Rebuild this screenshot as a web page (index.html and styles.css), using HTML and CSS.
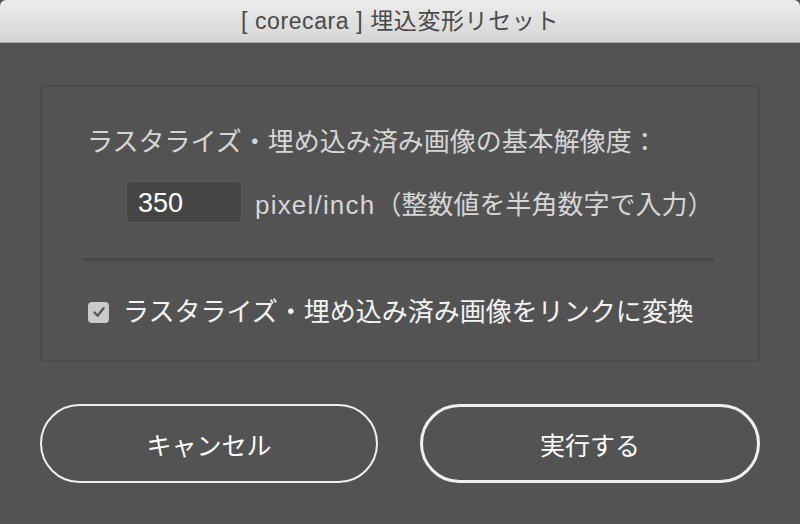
FILE: index.html
```html
<!DOCTYPE html>
<html lang="ja">
<head>
    <meta charset="UTF-8">
    <title>[ corecara ] 埋込変形リセット</title>
    <link rel="stylesheet" href="styles.css">
</head>
<body>
    <div class="titlebar">[ corecara ] 埋込変形リセット</div>
    <div class="content">
        <div class="panel">
            <div class="label">ラスタライズ・埋め込み済み画像の基本解像度：</div>
            <div class="res-row">
                <div class="num-input">350</div>
                <span class="unit"><span class="unit-latin">pixel/inch</span>（整数値を半角数字で入力）</span>
            </div>
            <div class="separator"></div>
            <div class="check-row">
                <span class="checkbox">
                    <svg width="14" height="14" viewBox="0 0 14 14">
                        <path d="M2.5 7.5 L5.6 10.8 L11.5 3.2" fill="none" stroke="#5a5a5a" stroke-width="2.4" stroke-linecap="round" stroke-linejoin="round"/>
                    </svg>
                </span>
                <span class="check-label">ラスタライズ・埋め込み済み画像をリンクに変換</span>
            </div>
        </div>
        <div class="buttons">
            <div class="btn">キャンセル</div>
            <div class="btn btn-primary">実行する</div>
        </div>
    </div>
</body>
</html>
```

FILE: styles.css
```css
body {
    margin: 0;
    background-color: #535353;
    font-family: 'Liberation Sans', 'Noto Sans CJK JP', sans-serif;
    height: 524px;
    overflow: hidden;
}
.titlebar {
    height: 42px;
    line-height: 42px;
    text-align: center;
    font-size: 23px;
    letter-spacing: 0.6px;
    color: #4a4a4a;
    background: linear-gradient(#ececec, #d5d5d5);
    border-bottom: 1px solid #a8a8a8;
    border-radius: 6px 6px 0 0;
}
.content {
    padding: 42px 40px 0;
}
.panel {
    height: 233px;
    border: 2px solid #4b4b4b;
    border-radius: 5px;
    padding: 40px 0 0 45px;
}
.label {
    font-size: 26px;
    line-height: 30px;
    color: #d6d6d6;
}
.res-row {
    display: flex;
    align-items: center;
    margin: 24px 0 0 39px;
}
.num-input {
    width: 103px;
    height: 40px;
    line-height: 42px;
    padding-left: 11px;
    background-color: #454545;
    border: 1px solid #5d5d5d;
    border-radius: 4px;
    color: #ffffff;
    font-size: 27px;
}
.unit {
    margin-left: 13px;
    font-size: 26px;
    color: #d6d6d6;
}
.unit-latin {
    letter-spacing: 1.2px;
}
.separator {
    margin: 35px 0 0 -4px;
    width: 631px;
    height: 3px;
    background-color: #474747;
}
.check-row {
    display: flex;
    align-items: center;
    margin-top: 36px;
    height: 30px;
}
.checkbox {
    display: flex;
    align-items: center;
    justify-content: center;
    width: 21px;
    height: 21px;
    margin-left: 1px;
    border-radius: 4px;
    background-color: #cacaca;
}
.check-label {
    margin-left: 14px;
    font-size: 26px;
    line-height: 30px;
    color: #f4f4f4;
}
.buttons {
    display: flex;
    gap: 42px;
    margin-top: 42px;
}
.btn {
    flex: 1;
    height: 75px;
    border: 2px solid #f0f0f0;
    border-radius: 40px;
    display: flex;
    align-items: center;
    justify-content: center;
    color: #ffffff;
    font-size: 25px;
}
.btn-primary {
    border-width: 3px;
    height: 73px;
}
```
